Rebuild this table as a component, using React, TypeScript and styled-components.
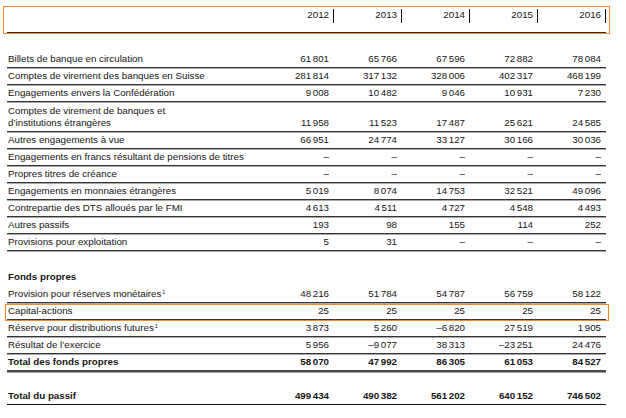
import React from "react";
import styled, { createGlobalStyle, css } from "styled-components";

const GlobalStyle = createGlobalStyle`
  html, body {
    margin: 0;
    padding: 0;
    background: #ffffff;
  }
  body {
    font-family: "Liberation Sans", Arial, sans-serif;
    color: #161616;
  }
`;

const ORANGE = "#f5892a";
const COLS = "259px repeat(5, 68px)";

const Sheet = styled.div`
  width: 599px;
  padding: 6px 0 0 7px;
  font-size: 9.75px;
`;

const HeaderRow = styled.div`
  position: relative;
  display: grid;
  grid-template-columns: ${COLS};
  box-sizing: border-box;
  height: 28px;
  padding-top: 3px;
  border-bottom: 2px solid #2a2a2a;
`;

const YearCell = styled.div`
  text-align: right;
`;

const Year = styled.span`
  display: inline-block;
  line-height: 10px;
  padding: 1px 4px 3px 0;
  border-right: 1px solid #111;
`;

const Highlight = styled.div<{ $l: number; $r: number; $t: number; $b: number }>`
  position: absolute;
  left: ${(p) => p.$l}px;
  right: ${(p) => p.$r}px;
  top: ${(p) => p.$t}px;
  bottom: ${(p) => p.$b}px;
  border: 1px solid ${ORANGE};
  pointer-events: none;
`;

const Gap = styled.div<{ $h: number }>`
  height: ${(p) => p.$h}px;
`;

type Line = "thin" | "thick" | "black" | "none";

const Row = styled.div<{ $line: Line; $tall?: boolean; $bold?: boolean }>`
  position: relative;
  display: grid;
  grid-template-columns: ${COLS};
  align-items: end;
  line-height: 12px;
  padding: ${(p) => (p.$tall ? "3px 0 2px" : "2px 0 2px")};
  font-weight: ${(p) => (p.$bold ? 700 : 400)};
  ${(p) =>
    p.$line === "thin" &&
    css`
      border-bottom: 1px solid #353535;
      box-shadow: 0 1px 0 #a9a9a9;
    `}
  ${(p) =>
    p.$line === "thick" &&
    css`
      border-bottom: 2px solid #474747;
      box-shadow: 0 1px 0 #a0a0a0;
    `}
  ${(p) =>
    p.$line === "black" &&
    css`
      border-bottom: 1px solid #111;
    `}
  ${(p) =>
    p.$line === "none" &&
    css`
      border-bottom: 1px solid transparent;
    `}
`;

const Label = styled.div`
  padding-left: 1px;
  white-space: pre-line;
`;

const Num = styled.div`
  text-align: right;
  padding-right: 5px;
  white-space: nowrap;
`;

const Group = styled.span<{ $first: boolean }>`
  margin-left: ${(p) => (p.$first ? 0 : 1.5)}px;
`;

const Sup = styled.sup`
  font-size: 5.5px;
  line-height: 0;
  vertical-align: 3.5px;
  margin-left: 1px;
`;

const D = "–";

type Item = {
  label: string;
  sup?: boolean;
  values: string[];
  tall?: boolean;
  bold?: boolean;
  line?: Line;
  highlight?: boolean;
};

const liabilities: Item[] = [
  { label: "Billets de banque en circulation", values: ["61 801", "65 766", "67 596", "72 882", "78 084"] },
  { label: "Comptes de virement des banques en Suisse", values: ["281 814", "317 132", "328 006", "402 317", "468 199"] },
  { label: "Engagements envers la Confédération", values: ["9 008", "10 482", "9 046", "10 931", "7 230"] },
  {
    label: "Comptes de virement de banques et\nd’institutions étrangères",
    values: ["11 958", "11 523", "17 487", "25 621", "24 585"],
    tall: true,
  },
  { label: "Autres engagements à vue", values: ["66 951", "24 774", "33 127", "30 166", "30 036"] },
  { label: "Engagements en francs résultant de pensions de titres", values: [D, D, D, D, D] },
  { label: "Propres titres de créance", values: [D, D, D, D, D] },
  { label: "Engagements en monnaies étrangères", values: ["5 019", "8 074", "14 753", "32 521", "49 096"] },
  { label: "Contrepartie des DTS alloués par le FMI", values: ["4 613", "4 511", "4 727", "4 548", "4 493"] },
  { label: "Autres passifs", values: ["193", "98", "155", "114", "252"] },
  { label: "Provisions pour exploitation", values: ["5", "31", D, D, D] },
];

const equity: Item[] = [
  { label: "Fonds propres", values: ["", "", "", "", ""], bold: true, line: "none" },
  { label: "Provision pour réserves monétaires", sup: true, values: ["48 216", "51 784", "54 787", "56 759", "58 122"] },
  { label: "Capital-actions", values: ["25", "25", "25", "25", "25"], highlight: true },
  { label: "Réserve pour distributions futures", sup: true, values: ["3 873", "5 260", "–6 820", "27 519", "1 905"] },
  { label: "Résultat de l’exercice", values: ["5 956", "–9 077", "38 313", "–23 251", "24 476"] },
  { label: "Total des fonds propres", values: ["58 070", "47 992", "86 305", "61 053", "84 527"], bold: true, line: "thick" },
];

const total: Item = {
  label: "Total du passif",
  values: ["499 434", "490 382", "561 202", "640 152", "746 502"],
  bold: true,
  line: "black",
};

const years = ["2012", "2013", "2014", "2015", "2016"];

function Amount({ value }: { value: string }) {
  const parts = value.split(" ");
  return (
    <Num>
      {parts.map((p, i) => (
        <Group key={i} $first={i === 0}>
          {p}
        </Group>
      ))}
    </Num>
  );
}

function TableRow({ item }: { item: Item }) {
  return (
    <Row $line={item.line ?? "thin"} $tall={item.tall} $bold={item.bold}>
      <Label>
        {item.label}
        {item.sup && <Sup>1</Sup>}
      </Label>
      {item.values.map((v, i) => (
        <Amount key={i} value={v} />
      ))}
      {item.highlight && <Highlight $l={-2} $r={-3} $t={1} $b={-2} />}
    </Row>
  );
}

export default function App() {
  return (
    <>
      <GlobalStyle />
      <Sheet>
        <HeaderRow>
          <div />
          {years.map((y) => (
            <YearCell key={y}>
              <Year>{y}</Year>
            </YearCell>
          ))}
          <Highlight $l={-4} $r={-4} $t={0} $b={-2} />
        </HeaderRow>
        <Gap $h={17} />
        {liabilities.map((it) => (
          <TableRow key={it.label} item={it} />
        ))}
        <Gap $h={18} />
        {equity.map((it) => (
          <TableRow key={it.label} item={it} />
        ))}
        <Gap $h={16} />
        <TableRow item={total} />
      </Sheet>
    </>
  );
}
